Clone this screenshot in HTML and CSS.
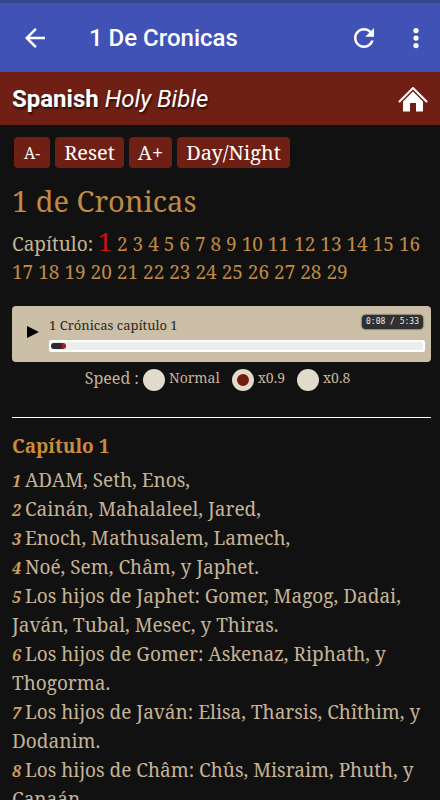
FILE: index.html
```html
<!DOCTYPE html>
<html lang="es">
<head>
    <meta charset="UTF-8">
    <meta name="viewport" content="width=device-width, initial-scale=1.0">
    <title>1 De Cronicas</title>
    <link rel="stylesheet" href="styles.css">
</head>
<body>
    <!-- App Bar -->
    <div class="app-bar">
        <button type="button" class="icon-btn" aria-label="Back">
            <svg width="30" height="30" viewBox="0 0 24 24"><path fill="#fff" d="M20 11H7.83l5.59-5.59L12 4l-8 8 8 8 1.41-1.41L7.83 13H20v-2z"/></svg>
        </button>
        <div class="app-title">1 De Cronicas</div>
        <button type="button" class="icon-btn" aria-label="Reload">
            <svg width="30" height="30" viewBox="0 0 24 24"><path fill="#fff" d="M17.65 6.35C16.2 4.9 14.21 4 12 4c-4.42 0-7.99 3.58-7.99 8s3.57 8 7.99 8c3.73 0 6.84-2.55 7.73-6h-2.08c-.82 2.33-3.04 4-5.65 4-3.31 0-6-2.69-6-6s2.69-6 6-6c1.66 0 3.14.69 4.22 1.78L13 11h7V4l-2.35 2.35z"/></svg>
        </button>
        <button type="button" class="icon-btn menu-btn" aria-label="Menu">
            <svg width="30" height="30" viewBox="0 0 24 24"><g fill="#fff"><circle cx="12" cy="6" r="2.1"/><circle cx="12" cy="12" r="2.1"/><circle cx="12" cy="18" r="2.1"/></g></svg>
        </button>
    </div>
    <!-- Site Header -->
    <header class="site-header">
        <h1><b>Spanish</b> <i>Holy Bible</i></h1>
        <a href="#" class="home-link" aria-label="Home">
            <svg width="30" height="26" viewBox="0 0 30 26">
                <path fill="none" stroke="#fff" stroke-width="2" stroke-linecap="round" stroke-linejoin="round" d="M1.500 15.500L15 2l13.500 13.500"/>
                <path fill="#fff" d="M15 5.500L5 15.500v10h7V17h6v8.500h7v-10z"/>
            </svg>
        </a>
    </header>
    <!-- Reader -->
    <main class="reader">
        <div class="toolbar">
            <button type="button" class="small">A-</button>
            <button type="button">Reset</button>
            <button type="button">A+</button>
            <button type="button">Day/Night</button>
        </div>
        <h2>1 de Cronicas</h2>
        <p class="chapters">
            Capítulo: <span class="current">1</span>
            <a href="#">2</a> <a href="#">3</a> <a href="#">4</a> <a href="#">5</a> <a href="#">6</a> <a href="#">7</a> <a href="#">8</a> <a href="#">9</a>
            <a href="#">10</a> <a href="#">11</a> <a href="#">12</a> <a href="#">13</a> <a href="#">14</a> <a href="#">15</a> <a href="#">16</a>
            <a href="#">17</a> <a href="#">18</a> <a href="#">19</a> <a href="#">20</a> <a href="#">21</a> <a href="#">22</a> <a href="#">23</a>
            <a href="#">24</a> <a href="#">25</a> <a href="#">26</a> <a href="#">27</a> <a href="#">28</a> <a href="#">29</a>
        </p>
        <!-- Audio Player -->
        <div class="player">
            <button type="button" class="play" aria-label="Play">
                <svg width="12" height="14" viewBox="0 0 12 14"><path d="M0 1l12 6-12 6z"/></svg>
            </button>
            <div class="track">
                <div class="track-info">
                    <span class="track-title">1 Crónicas capítulo 1</span>
                    <span class="time">0:08 / 5:33</span>
                </div>
                <div class="progress"><div class="played"></div></div>
            </div>
        </div>
        <div class="speed">
            <span>Speed :</span>
            <label><input type="radio" name="speed" value="1">Normal</label>
            <label><input type="radio" name="speed" value="0.9" checked>x0.9</label>
            <label><input type="radio" name="speed" value="0.8">x0.8</label>
        </div>
        <hr>
        <!-- Chapter Text -->
        <h3>Capítulo 1</h3>
        <p class="verse"><span class="num">1</span>ADAM, Seth, Enos,</p>
        <p class="verse"><span class="num">2</span>Cainán, Mahalaleel, Jared,</p>
        <p class="verse"><span class="num">3</span>Enoch, Mathusalem, Lamech,</p>
        <p class="verse"><span class="num">4</span>Noé, Sem, Châm, y Japhet.</p>
        <p class="verse"><span class="num">5</span>Los hijos de Japhet: Gomer, Magog, Dadai, Javán, Tubal, Mesec, y Thiras.</p>
        <p class="verse"><span class="num">6</span>Los hijos de Gomer: Askenaz, Riphath, y Thogorma.</p>
        <p class="verse"><span class="num">7</span>Los hijos de Javán: Elisa, Tharsis, Chîthim, y Dodanim.</p>
        <p class="verse"><span class="num">8</span>Los hijos de Châm: Chûs, Misraim, Phuth, y Canaán.</p>
    </main>
</body>
</html>
```
FILE: styles.css
```css
* {
    box-sizing: border-box;
}
body {
    margin: 0;
    height: 100vh;
    display: flex;
    flex-direction: column;
    overflow: hidden;
    background: #111;
    color: #c5b497;
    font-family: "Noto Serif", "DejaVu Serif Condensed", "Liberation Serif", serif;
    font-size: 19px;
}
button {
    border: none;
    padding: 0;
    background: none;
    font-family: inherit;
    cursor: pointer;
}
a {
    color: #bf8a45;
    text-decoration: none;
}
/* App Bar */
.app-bar {
    display: flex;
    align-items: center;
    flex-shrink: 0;
    height: 72px;
    padding: 0 9px 0 20px;
    border-top: 3px solid #35478c;
    background: #4052b5;
}
.icon-btn {
    display: flex;
}
.app-title {
    flex: 1;
    padding-left: 39px;
    color: #fff;
    font: 500 24px Roboto, sans-serif;
}
.menu-btn {
    margin-left: 22px;
}
/* Site Header */
.site-header {
    display: flex;
    align-items: center;
    justify-content: space-between;
    flex-shrink: 0;
    height: 53px;
    padding: 0 12px;
    background: #6f1f14;
}
.site-header h1 {
    margin: 0;
    color: #fff;
    font: 24px Roboto, sans-serif;
    text-shadow: 1px 2px 2px rgba(0, 0, 0, 0.6);
}
.home-link {
    display: flex;
}
/* Reader */
.reader {
    flex: 1;
    overflow-y: auto;
    scrollbar-width: none;
    padding: 12px 9px 12px 12px;
}
.toolbar {
    display: flex;
    gap: 5px;
    padding-left: 2px;
}
.toolbar button {
    height: 31px;
    padding: 0 9px;
    border-radius: 4px;
    background: #6f1f14;
    color: #fff;
    font-size: 20px;
}
.toolbar .small {
    padding: 0 10px;
    font-size: 16px;
}
h2 {
    margin: 13px 0 8px;
    color: #bf8a45;
    font-size: 29px;
    font-weight: normal;
    line-height: 40px;
}
.chapters {
    margin: 0;
    line-height: 28px;
}
.chapters .current {
    color: #c81414;
    font-size: 25px;
    line-height: 24px;
}
/* Audio Player */
.player {
    display: flex;
    align-items: center;
    gap: 10px;
    height: 56px;
    margin-top: 20px;
    padding: 0 6px 0 15px;
    border-radius: 4px;
    background: #cbbfa7;
}
.track {
    flex: 1;
    padding-bottom: 2px;
}
.track-info {
    display: flex;
    align-items: flex-start;
    justify-content: space-between;
    height: 26px;
}
.track-title {
    padding-top: 2px;
    color: #2b2722;
    font-size: 13px;
    line-height: 18px;
}
.time {
    margin: 1px 2px 0 0;
    padding: 0 4px;
    border-radius: 4px;
    background: #303030;
    box-shadow: 0 0 2px #000;
    color: #eee;
    font: 8px/14px "DejaVu Sans Mono", monospace;
}
.progress {
    height: 12px;
    padding: 1px 0;
    border: 2px solid #fff;
    border-radius: 2px;
    background: #eceded;
}
.played {
    width: 4%;
    height: 6px;
    border-right: 4px solid #a51c1c;
    border-radius: 3px;
    background: #2b2b2b;
}
.speed {
    display: flex;
    justify-content: center;
    gap: 4px;
    margin-top: 4px;
    font-size: 16px;
    line-height: 24px;
}
.speed label {
    display: flex;
    font-size: 14px;
    margin-right: 8px;
}
.speed input {
    appearance: none;
    width: 22px;
    height: 22px;
    margin: 3px 4px 0 0;
    border-radius: 50%;
    background: #e2dbcb;
}
.speed input:checked {
    border: 5px solid #e2dbcb;
    background: #751a10;
}
hr {
    height: 1px;
    margin: 26px 0 14px;
    border: none;
    background: #fff;
}
/* Chapter Text */
h3 {
    margin: 0 0 5px;
    color: #c98c3c;
    font-size: 19px;
    line-height: 29px;
}
.verse {
    margin: 0;
    line-height: 29px;
}
.num {
    margin-right: 4px;
    color: #cf9d5e;
    font-size: 16px;
    font-style: italic;
    font-weight: bold;
    line-height: 16px;
}
```
